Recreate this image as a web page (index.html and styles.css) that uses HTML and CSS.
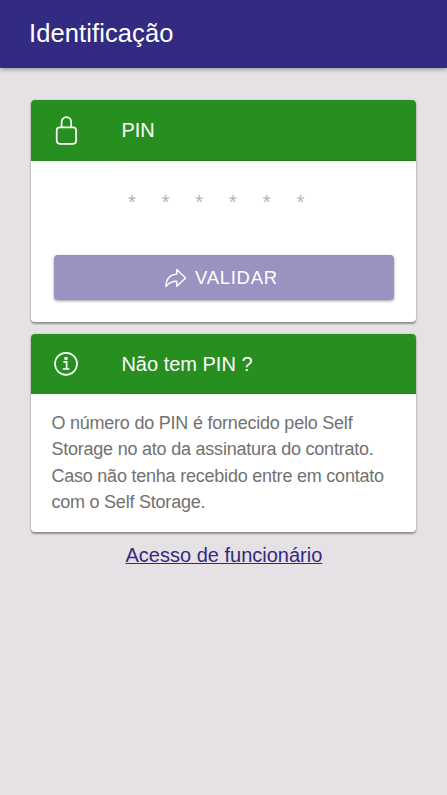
FILE: index.html
```
<!DOCTYPE html>
<html lang="pt-BR">
<head>
    <meta charset="UTF-8">
    <meta name="viewport" content="width=device-width, initial-scale=1.0">
    <title>Identificação</title>
    <link rel="stylesheet" href="styles.css">
</head>
<body>
    <header class="toolbar">
        <h1>Identificação</h1>
    </header>
    <main class="content">
        <form class="card" id="pinForm">
            <div class="card-header">
                <svg class="icon" viewBox="0 0 28 32" fill="none" stroke="#fff" stroke-width="1.7">
                    <rect x="4.7" y="12.4" width="19.4" height="16.4" rx="3"/>
                    <path d="M9.6 12.4V7a4.8 4.8 0 0 1 9.6 0v5.4"/>
                </svg>
                <label class="card-title" for="pin">PIN</label>
            </div>
            <div class="pin-body">
                <input class="pin-input" type="tel" id="pin" name="pin" maxlength="6" placeholder="******">
                <button class="button" type="submit" disabled>
                    <svg class="arrow" viewBox="0 0 22 20" fill="none" stroke="#fff" stroke-width="1.4" stroke-linejoin="round">
                        <path d="M11.8 1.5L20.6 9.9L11.8 18.3V13.3C7 13.3 3.8 14.4 1 18.6C1 11.3 4.6 6.6 11.8 6.1Z"/>
                    </svg>
                    <span>VALIDAR</span>
                </button>
            </div>
        </form>

        <section class="card">
            <div class="card-header">
                <svg class="icon" viewBox="0 0 28 32" fill="none" stroke="#fff" stroke-width="1.7">
                    <circle cx="14" cy="15.8" r="11"/>
                    <path d="M11.4 13.9h3.2v7M10.8 21h6.6"/>
                    <circle cx="14" cy="10.5" r="1.8" fill="#fff" stroke="none"/>
                </svg>
                <h2 class="card-title">Não tem PIN ?</h2>
            </div>
            <p class="card-text">O número do PIN é fornecido pelo Self Storage no ato da assinatura do contrato. Caso não tenha recebido entre em contato com o Self Storage.</p>
        </section>

        <a class="staff-link" href="#">Acesso de funcionário</a>
    </main>
</body>
</html>
```

FILE: styles.css
```
* {
    box-sizing: border-box;
}
body {
    font-family: Arial, "Liberation Sans", sans-serif;
    background-color: #e6e1e5;
    margin: 0;
    min-height: 100vh;
}
.toolbar {
    display: flex;
    align-items: center;
    height: 68px;
    padding: 0 29px 1px;
    background-color: #332a82;
    color: #fff;
    box-shadow: 0 1px 5px rgba(0, 0, 0, 0.4);
}
.toolbar h1 {
    margin: 0;
    font-size: 25.5px;
    font-weight: normal;
    letter-spacing: 0.1px;
}
.content {
    display: flex;
    flex-direction: column;
    padding: 32.4px 30.6px 0 31.4px;
}
.card {
    margin-bottom: 12.4px;
    border-radius: 4px;
    overflow: hidden;
    background-color: #fff;
    box-shadow: 0 2px 2px rgba(0, 0, 0, 0.35), 0 0 2px rgba(0, 0, 0, 0.2);
}
.card-header {
    display: flex;
    align-items: center;
    height: 60.4px;
    padding-left: 21px;
    background-color: #278f1f;
    color: #fff;
}
.icon {
    width: 28px;
    height: 32px;
    margin-right: 41px;
}
.card-title {
    flex: 1;
    height: 60.4px;
    margin: 0;
    border-bottom: 1px solid #1f7f18;
    font-size: 20px;
    font-weight: normal;
    line-height: 61px;
}
.pin-body {
    display: flex;
    flex-direction: column;
    padding: 17.4px 22.6px 21.4px;
}
.pin-input {
    height: 49px;
    margin-bottom: 28px;
    padding: 0 0 0 74px;
    border: none;
    background: none;
    font-family: inherit;
    font-size: 20px;
    letter-spacing: 25.9px;
    outline: none;
}
.pin-input::placeholder {
    color: #b4b4b4;
}
.button {
    display: flex;
    align-items: center;
    justify-content: center;
    gap: 8px;
    height: 45px;
    padding: 0 5px 0 0;
    border: none;
    border-radius: 4px;
    background-color: #9a93c2;
    color: #fff;
    font-family: inherit;
    font-size: 18.5px;
    letter-spacing: 0.7px;
    box-shadow: 0 1px 3px rgba(0, 0, 0, 0.4);
}
.arrow {
    width: 22px;
    height: 20px;
}
.card-text {
    margin: 0;
    padding: 15.6px 20px 16.4px;
    color: #717171;
    font-size: 18px;
    letter-spacing: -0.22px;
    line-height: 26.3px;
}
.staff-link {
    align-self: center;
    color: #332a82;
    font-size: 20px;
    line-height: 23px;
    text-decoration-thickness: 1px;
}
```
